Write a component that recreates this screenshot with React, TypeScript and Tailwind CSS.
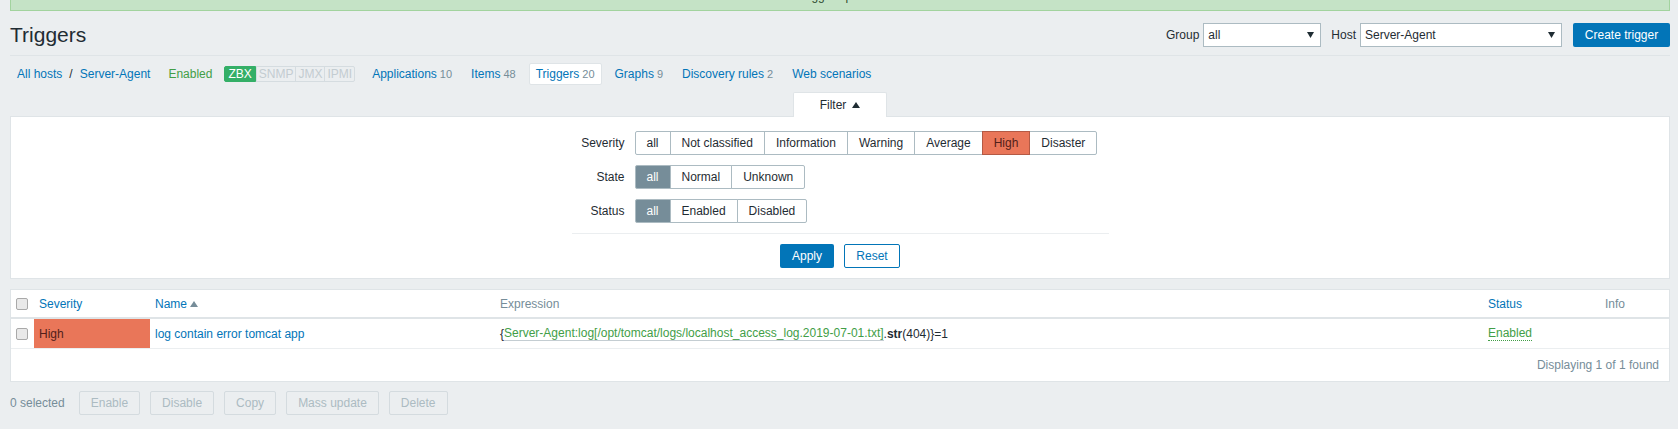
import React from 'react';

const blue = 'text-[#0275b8]';

function Caret({ up = false, className = '' }: { up?: boolean; className?: string }) {
    return (
        <svg width="8" height="6" viewBox="0 0 8 6" className={className}>
            {up ? <polygon points="0,6 8,6 4,0" fill="currentColor" /> : <polygon points="0,0 8,0 4,6" fill="currentColor" />}
        </svg>
    );
}

function Select({ value, width }: { value: string; width: string }) {
    return (
        <div className={`${width} h-[24px] flex items-center justify-between border border-[#acbbc2] bg-white pl-[4px] pr-[6px] text-[#1f2c33]`}>
            <span>{value}</span>
            <svg width="7" height="6" viewBox="0 0 7 6">
                <polygon points="0,0 7,0 3.5,6" fill="#1f2c33" />
            </svg>
        </div>
    );
}

function Checkbox() {
    return <span className="block w-[12px] h-[12px] rounded-[2px] border border-[#a9a9a9] bg-[#e9e9e9]" />;
}

type Opt = { label: string; active?: 'grey' | 'high' };

function Segmented({ options }: { options: Opt[] }) {
    return (
        <div className="flex">
            {options.map((o, i) => (
                <div
                    key={o.label}
                    className={`h-[24px] flex items-center whitespace-nowrap shrink-0 px-[11px] border border-[#acbbc2] ${i > 0 ? '-ml-px' : ''} ${
                        o.active === 'grey'
                            ? 'bg-[#768d99] text-white border-[#768d99]'
                            : o.active === 'high'
                            ? 'bg-[#e97659] text-[#52201a] relative z-10 border-[#b45a45]'
                            : 'bg-white text-[#1f2c33]'
                    } ${i === 0 ? 'rounded-l-[2px]' : ''} ${i === options.length - 1 ? 'rounded-r-[2px]' : ''}`}
                >
                    {o.label}
                </div>
            ))}
        </div>
    );
}

function NavItem({ label, count, active }: { label: string; count?: string; active?: boolean }) {
    return (
        <div
            className={`h-[22px] flex items-center px-[6px] ${
                active ? 'bg-white border border-[#dfe4e7] rounded-[2px] px-[5px]' : ''
            }`}
        >
            <span className={blue}>{label}</span>
            {count && <span className="ml-[3px] text-[#768d99] text-[11px]">{count}</span>}
        </div>
    );
}

export default function App() {
    return (
        <div
            className="min-h-[429px] bg-[#ebeef0] pl-[10px] pr-[8px] text-[12px] leading-[14px] text-[#1f2c33]"
            style={{ fontFamily: '"Liberation Sans", Arial, sans-serif' }}
        >
            {/* message banner, scrolled mostly out of view */}
            <div className="h-[11px] overflow-hidden bg-[#c5e3c6] border-x border-b border-[#a2d39e] text-center text-[#2d4a2f]">
                <div className="-mt-[11px] leading-[14px]">Trigger updated</div>
            </div>

            {/* Header */}
            <div className="flex items-center justify-between pt-[12px] pb-[8px] border-b border-[#dfe4e7]">
                <h1 className="text-[21px] leading-[24px] text-[#1f2c33]">Triggers</h1>
                <div className="flex items-center">
                    <span className="mr-[4px]">Group</span>
                    <Select value="all" width="w-[118px]" />
                    <span className="ml-[10px] mr-[4px]">Host</span>
                    <Select value="Server-Agent" width="w-[202px]" />
                    <button className="ml-[11px] h-[24px] w-[97px] rounded-[2px] bg-[#0275b8] text-white">
                        Create trigger
                    </button>
                </div>
            </div>

            {/* Host navigation */}
            <div className="mt-[7px] flex items-center h-[22px]">
                <span className={`${blue} ml-[7px]`}>All hosts</span>
                <span className="mx-[7px] text-[#1f2c33]">/</span>
                <span className={blue}>Server-Agent</span>
                <span className="ml-[18px] text-[#429e47]">Enabled</span>
                <div className="ml-[12px] mr-[11px] flex">
                    <span className="h-[16px] px-[3px] flex items-center rounded-l-[2px] bg-[#34af67] border border-[#34af67] text-white">ZBX</span>
                    <span className="h-[16px] px-[2px] flex items-center border border-[#d5dce0] text-[#c3ccd1]">SNMP</span>
                    <span className="h-[16px] px-[2px] -ml-px flex items-center border border-[#d5dce0] text-[#c3ccd1]">JMX</span>
                    <span className="h-[16px] px-[2px] -ml-px flex items-center rounded-r-[2px] border border-[#d5dce0] text-[#c3ccd1]">IPMI</span>
                </div>
                <div className="flex items-center gap-[7px]">
                    <NavItem label="Applications" count="10" />
                    <NavItem label="Items" count="48" />
                    <NavItem label="Triggers" count="20" active />
                    <NavItem label="Graphs" count="9" />
                    <NavItem label="Discovery rules" count="2" />
                    <NavItem label="Web scenarios" />
                </div>
            </div>

            {/* Filter */}
            <div className="mt-[7px] flex justify-center">
                <div className="relative z-10 -mb-px w-[94px] h-[25px] flex items-center justify-center gap-[6px] bg-white border border-b-0 border-[#dfe4e7] rounded-t-[2px]">
                    <span>Filter</span>
                    <Caret up className="text-[#1f2c33]" />
                </div>
            </div>
            <div className="bg-white border border-[#dfe4e7] pt-[14px] pb-[10px]">
                <div className="w-[537px] mx-auto">
                    <div className="grid grid-cols-[63px_auto] justify-start gap-y-[10px]">
                        <div className="pr-[10px] h-[24px] flex items-center justify-end">Severity</div>
                        <Segmented
                            options={[
                                { label: 'all' },
                                { label: 'Not classified' },
                                { label: 'Information' },
                                { label: 'Warning' },
                                { label: 'Average' },
                                { label: 'High', active: 'high' },
                                { label: 'Disaster' },
                            ]}
                        />
                        <div className="pr-[10px] h-[24px] flex items-center justify-end">State</div>
                        <Segmented options={[{ label: 'all', active: 'grey' }, { label: 'Normal' }, { label: 'Unknown' }]} />
                        <div className="pr-[10px] h-[24px] flex items-center justify-end">Status</div>
                        <Segmented options={[{ label: 'all', active: 'grey' }, { label: 'Enabled' }, { label: 'Disabled' }]} />
                    </div>
                    <div className="mt-[10px] border-t border-[#ebeef0]" />
                    <div className="mt-[10px] flex justify-center gap-[10px]">
                        <button className="h-[24px] w-[54px] rounded-[2px] bg-[#0275b8] text-white">Apply</button>
                        <button className="h-[24px] w-[56px] rounded-[2px] border border-[#0275b8] bg-white text-[#0275b8]">Reset</button>
                    </div>
                </div>
            </div>

            {/* Table */}
            <div className="mt-[10px] bg-white border border-[#dfe4e7]">
                <div className="grid grid-cols-[23px_116px_345px_1fr_117px_69px]">
                    {/* header */}
                    <div className="h-[29px] border-b-2 border-[#dfe4e7] flex items-center pl-[5px]">
                        <Checkbox />
                    </div>
                    <div className={`h-[29px] border-b-2 border-[#dfe4e7] flex items-center pl-[5px] ${blue}`}>Severity</div>
                    <div className={`h-[29px] border-b-2 border-[#dfe4e7] flex items-center pl-[5px] ${blue}`}>
                        Name
                        <svg width="8" height="6" viewBox="0 0 8 6" className="ml-[3px] text-[#768d99]">
                            <polygon points="0,6 8,6 4,0" fill="currentColor" />
                        </svg>
                    </div>
                    <div className="h-[29px] border-b-2 border-[#dfe4e7] flex items-center pl-[5px] text-[#768d99]">Expression</div>
                    <div className={`h-[29px] border-b-2 border-[#dfe4e7] flex items-center pl-[5px] ${blue}`}>Status</div>
                    <div className="h-[29px] border-b-2 border-[#dfe4e7] flex items-center pl-[5px] text-[#768d99]">Info</div>

                    {/* row */}
                    <div className="h-[30px] border-b border-[#ebeef0] flex items-center pl-[5px]">
                        <Checkbox />
                    </div>
                    <div className="h-[30px] border-b border-[#ebeef0] flex items-center pl-[5px] bg-[#e97659] text-[#52201a]">High</div>
                    <div className={`h-[30px] border-b border-[#ebeef0] flex items-center pl-[5px] ${blue}`}>log contain error tomcat app</div>
                    <div className="h-[30px] border-b border-[#ebeef0] flex items-center pl-[5px]">
                        <span>{'{'}</span>
                        <span className="text-[#429e47] border-b border-[#c4cdd2] leading-[14px]">
                            Server-Agent:log[/opt/tomcat/logs/localhost_access_log.2019-07-01.txt]
                        </span>
                        <span>.</span>
                        <span className="font-bold">str</span>
                        <span>(404){'}'}=1</span>
                    </div>
                    <div className="h-[30px] border-b border-[#ebeef0] flex items-center pl-[5px]">
                        <span className="text-[#429e47] border-b border-dotted border-[#429e47]">Enabled</span>
                    </div>
                    <div className="h-[30px] border-b border-[#ebeef0]" />
                </div>
                <div className="h-[32px] flex items-center justify-end pr-[10px] text-[#768d99]">Displaying 1 of 1 found</div>
            </div>

            {/* Action bar */}
            <div className="mt-[9px] flex items-center gap-[10px]">
                <span className="text-[#768d99] mr-[4px]">0 selected</span>
                {['Enable', 'Disable', 'Copy', 'Mass update', 'Delete'].map((b) => (
                    <button
                        key={b}
                        className="h-[24px] px-[11px] rounded-[2px] border border-[#d4dbdf] text-[#acbbc2]"
                    >
                        {b}
                    </button>
                ))}
            </div>
        </div>
    );
}
